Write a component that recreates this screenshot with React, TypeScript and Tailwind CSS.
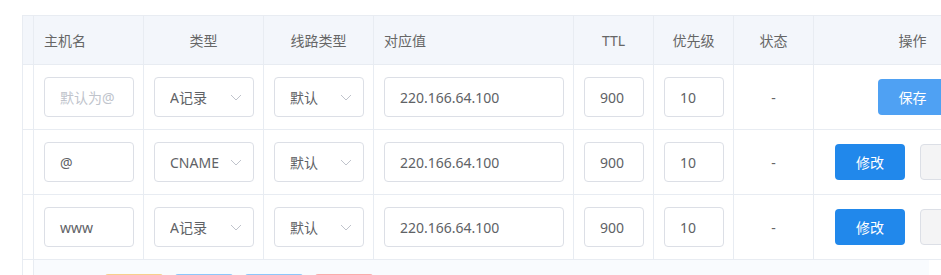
import React from 'react';

type Row = {
    host: string;
    type: string;
    line: string;
    value: string;
    ttl: string;
    mx: string;
    isNew?: boolean;
};

const rows: Row[] = [
    { host: '', type: 'A记录', line: '默认', value: '220.166.64.100', ttl: '900', mx: '10', isNew: true },
    { host: '@', type: 'CNAME', line: '默认', value: '220.166.64.100', ttl: '900', mx: '10' },
    { host: 'www', type: 'A记录', line: '默认', value: '220.166.64.100', ttl: '900', mx: '10' },
];

const Chevron = () => (
    <svg width="12" height="7" viewBox="0 0 12 7" fill="none" className="shrink-0">
        <path d="M1 1l5 5 5-5" stroke="#c0c4cc" strokeWidth="1" />
    </svg>
);

const Field = ({ value, placeholder, width }: { value: string; placeholder?: string; width: string }) => (
    <div className={`${width} h-[40px] border border-[#dcdfe6] rounded-[4px] bg-white flex items-center px-[15px] text-[14px]`}>
        {value ? (
            <span className="text-[#606266]">{value}</span>
        ) : (
            <span className="text-[#c0c4cc]">{placeholder}</span>
        )}
    </div>
);

const Select = ({ value, width }: { value: string; width: string }) => (
    <div className={`${width} h-[40px] border border-[#dcdfe6] rounded-[4px] bg-white flex items-center justify-between pl-[15px] pr-[11px] text-[14px] text-[#606266]`}>
        <span className="whitespace-nowrap overflow-hidden">{value}</span>
        <Chevron />
    </div>
);

const cell = 'shrink-0 border-r border-[#e8ecf2] flex items-center';

const App = () => {
    return (
        <div
            className="w-[941px] h-[275px] overflow-hidden bg-white pt-[15px] pl-[22px]"
            style={{ fontFamily: '"Noto Sans", "Noto Sans CJK SC", sans-serif' }}
        >
            <div className="w-[990px] border-l border-t border-[#e8ecf2]">
                {/* header */}
                <div className="flex h-[49px] bg-[#f3f6fb] border-b border-[#e8ecf2] text-[14px] text-[#666]">
                    <div className={`${cell} w-[11px]`} />
                    <div className={`${cell} w-[110px] pl-[10px]`}>主机名</div>
                    <div className={`${cell} w-[120px] justify-center`}>类型</div>
                    <div className={`${cell} w-[110px] justify-center`}>线路类型</div>
                    <div className={`${cell} w-[200px] pl-[10px]`}>对应值</div>
                    <div className={`${cell} w-[80px] justify-center`}>TTL</div>
                    <div className={`${cell} w-[80px] justify-center`}>优先级</div>
                    <div className={`${cell} w-[80px] justify-center`}>状态</div>
                    <div className={`${cell} w-[198px] justify-center`}>操作</div>
                </div>

                {rows.map((r, i) => (
                    <div key={i} className="flex h-[65px] border-b border-[#e8ecf2] bg-white">
                        <div className={`${cell} w-[11px]`} />
                        <div className={`${cell} w-[110px] pl-[10px]`}>
                            <Field value={r.host} placeholder="默认为@" width="w-[90px]" />
                        </div>
                        <div className={`${cell} w-[120px] pl-[10px]`}>
                            <Select value={r.type} width="w-[100px]" />
                        </div>
                        <div className={`${cell} w-[110px] pl-[10px]`}>
                            <Select value={r.line} width="w-[90px]" />
                        </div>
                        <div className={`${cell} w-[200px] pl-[10px]`}>
                            <Field value={r.value} width="w-[180px]" />
                        </div>
                        <div className={`${cell} w-[80px] pl-[10px]`}>
                            <Field value={r.ttl} width="w-[60px]" />
                        </div>
                        <div className={`${cell} w-[80px] pl-[10px]`}>
                            <Field value={r.mx} width="w-[60px]" />
                        </div>
                        <div className={`${cell} w-[80px] justify-center text-[14px] text-[#666]`}>-</div>
                        <div className={`${cell} w-[198px] justify-center gap-[15px]`}>
                            {r.isNew ? (
                                <button className="w-[70px] h-[36px] rounded-[4px] bg-[#4fa1f3] text-white text-[14px]">保存</button>
                            ) : (
                                <>
                                    <button className="w-[70px] h-[36px] rounded-[4px] bg-[#2188eb] text-white text-[14px]">修改</button>
                                    <button className="w-[70px] h-[36px] rounded-[4px] bg-[#f4f4f5] border border-[#dcdfe6] text-[#606266] text-[14px]">删除</button>
                                </>
                            )}
                        </div>
                    </div>
                ))}

                {/* footer */}
                <div className="flex h-[60px]">
                    <div className={`${cell} w-[11px] bg-white`} />
                    <div className="w-[895px] bg-[#f9fbfe] pt-[14px] pl-[71px] flex gap-[12px] items-start">
                        <div className="w-[58px] h-[32px] rounded-[3px] bg-[#f8cf8c]" />
                        <div className="w-[58px] h-[32px] rounded-[3px] bg-[#8ec6fa]" />
                        <div className="w-[58px] h-[32px] rounded-[3px] bg-[#8ec6fa]" />
                        <div className="w-[58px] h-[32px] rounded-[3px] bg-[#fbabab]" />
                    </div>
                </div>
            </div>
        </div>
    );
};

export default App;
